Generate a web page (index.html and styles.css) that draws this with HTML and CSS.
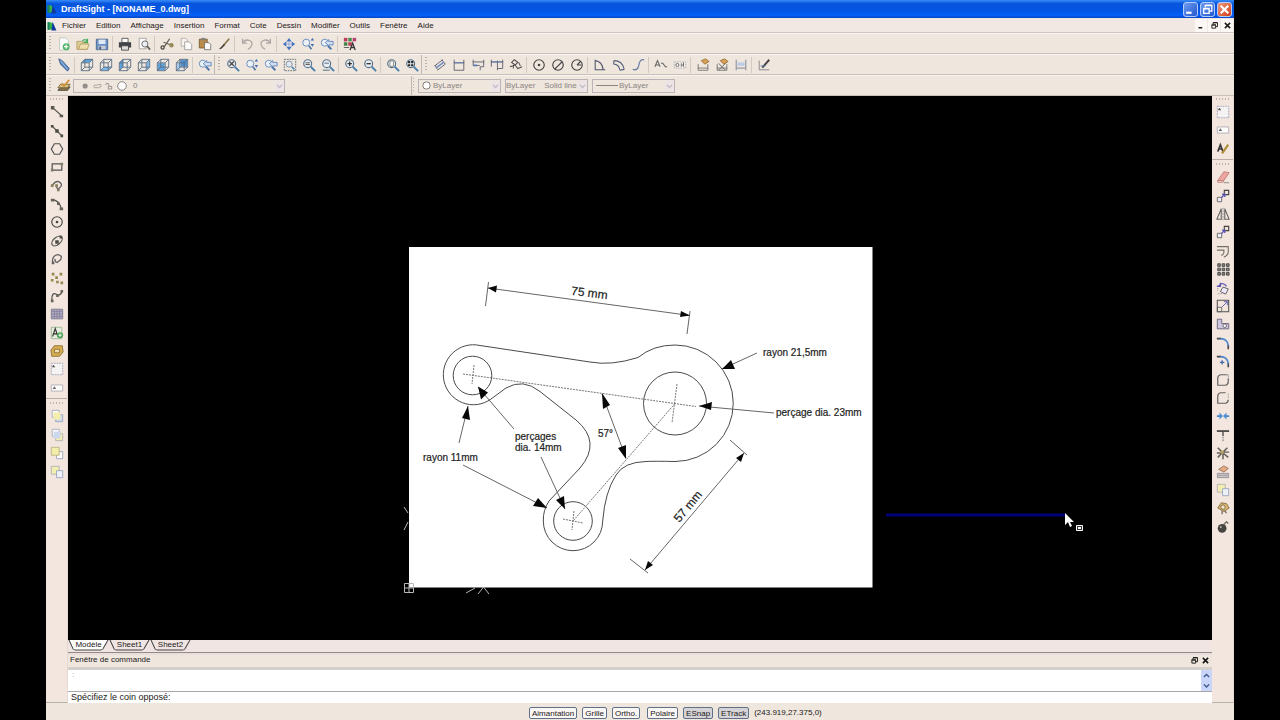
FILE: index.html
```html
<!DOCTYPE html>
<html lang="fr">
<head>
<meta charset="utf-8">
<title>DraftSight - [NONAME_0.dwg]</title>
<link rel="stylesheet" href="styles.css">
</head>
<body>
<svg class="sprite" aria-hidden="true">
  <symbol id="logo" viewBox="0 0 16 16"><path d="M1 2h4q5 1 5 6t-5 6H1z" fill="#35b44a"/><path d="M9 1l6 14H7z" fill="#123a9c"/><path d="M1 2h3v12H1z" fill="#1b7f5e"/></symbol>
  <symbol id="new" viewBox="0 0 16 16"><path d="M3 1h7l3 3v11H3z" fill="#fff" stroke="#b9c3bb"/><circle cx="10.500" cy="11" r="4" fill="#3fae58"/><path d="M10.500 8.500v5M8 11h5" stroke="#fff" stroke-width="1.500"/></symbol>
  <symbol id="open" viewBox="0 0 16 16"><path d="M1 5h5l1 1h6v8H1z" fill="#dfc98b" stroke="#ad965a"/><path d="M3 14l2-6h10l-2 6z" fill="#efe0ac" stroke="#ad965a"/><path d="M7 5q3-4 6 0M13 2v4h-4" fill="none" stroke="#35a651" stroke-width="1.500"/></symbol>
  <symbol id="save" viewBox="0 0 16 16"><path d="M1.500 2.500h13v12h-13z" fill="#5c88c3" stroke="#3c5a86"/><path d="M4 3h8v5H4z" fill="#dfeaf7"/><path d="M4 10h8v4H4z" fill="#c4cbd4"/><path d="M5 11h2v3H5z" fill="#33465f"/></symbol>
  <symbol id="print" viewBox="0 0 16 16"><path d="M4.500 1.500h7v5h-7z" fill="#fff" stroke="#444"/><path d="M1 6h14v6H1z" fill="#303236"/><path d="M4 10h8v5H4z" fill="#ddd" stroke="#333"/></symbol>
  <symbol id="preview" viewBox="0 0 16 16"><path d="M2.500 1.500h8v12h-8z" fill="#fff" stroke="#999"/><circle cx="9" cy="8" r="3.500" fill="#e9f1f6" stroke="#555"/><path d="M11.500 10.500l3.500 4" stroke="#555" stroke-width="2"/></symbol>
  <symbol id="cut" viewBox="0 0 16 16"><path d="M11 2L5 11M4 6l11 4" stroke="#5b564a" stroke-width="1.500"/><circle cx="3" cy="12" r="1.800" fill="none" stroke="#3b382f" stroke-width="1.500"/><circle cx="13" cy="9.500" r="1.800" fill="none" stroke="#8b7c3c" stroke-width="1.500"/></symbol>
  <symbol id="copy" viewBox="0 0 16 16"><path d="M2.500 1.500h5l2 2v7h-7z" fill="#f7f5f2" stroke="#aaa5a0"/><path d="M6.500 5.500h5l3 3v6h-8z" fill="#fff" stroke="#999590"/></symbol>
  <symbol id="paste" viewBox="0 0 16 16"><path d="M1.500 2.500h9v10h-9z" fill="#b58238" stroke="#6b4c20"/><path d="M4 1h4v3H4z" fill="#777"/><path d="M7.500 6.500h5l2 2v6h-7z" fill="#fff" stroke="#6c675e"/></symbol>
  <symbol id="brush" viewBox="0 0 16 16"><path d="M14 2L7 10" stroke="#7b6a3f" stroke-width="2"/><path d="M8 8L2 14l3-.500 4-4z" fill="#2c2a24"/></symbol>
  <symbol id="undo" viewBox="0 0 16 16"><path d="M3 2v5h5M3 7q3-5 8-3t1 8l-3 2" fill="none" stroke="#a8a29d" stroke-width="1.500"/></symbol>
  <symbol id="redo" viewBox="0 0 16 16"><path d="M13 2v5H8M13 7q-3-5-8-3t-1 8l3 2" fill="none" stroke="#a8a29d" stroke-width="1.500"/></symbol>
  <symbol id="pan" viewBox="0 0 16 16"><path d="M8 1l3 4H5zM8 15l3-4H5zM1 8l4-3v6zM15 8l-4-3v6z" fill="#2f66bd"/><path d="M8 5v6M5 8h6" stroke="#7ea2dc"/></symbol>
  <symbol id="lens" viewBox="0 0 16 16"><circle cx="6.500" cy="6.500" r="4.500" fill="#e4eef5" stroke="#47627c" stroke-width="1.300"/><path d="M10 10l5 5" stroke="#3c78a8" stroke-width="2.200"/></symbol>
  <symbol id="zoomdyn" viewBox="0 0 16 16"><circle cx="6" cy="6.500" r="4" fill="#edf4fa" stroke="#4a78b7"/><path d="M9 10l3 4" stroke="#3f6ca5" stroke-width="2"/><path d="M13 1l2 3h-4zM13 11l2-3h-4z" fill="#2c5fb2"/></symbol>
  <symbol id="zoomprev" viewBox="0 0 16 16"><circle cx="5.500" cy="6.500" r="4" fill="#edf4fa" stroke="#4a78b7"/><path d="M9 10l4 4" stroke="#3f6ca5" stroke-width="2.200"/><path d="M6 6.500l4-3.500v2h5v4h-5v1z" fill="#cfe0f4" stroke="#4a78b7"/></symbol>
  <symbol id="palette" viewBox="0 0 16 16"><path d="M1 1h4v4H1z" fill="#bd284e"/><path d="M6 1h4v4H6z" fill="#34833c"/><path d="M11 1h4v4h-4z" fill="#b52e63"/><path d="M1 6h4v4H1z" fill="#2e7c39"/><path d="M6 6h4v4H6z" fill="#b82947"/><path d="M1 12h6" stroke="#444"/><path d="M8 15l3-8 3 8M9 12h4" fill="none" stroke="#222" stroke-width="1.500"/></symbol>
  <symbol id="pencil" viewBox="0 0 16 16"><path d="M2 1l4 2 8 9-2 3-8-8z" fill="#4d7fbe" stroke="#2f5389"/><path d="M4 3l8 10" stroke="#9fc1e8"/></symbol>
  <symbol id="cube" viewBox="0 0 16 16"><path d="M1.500 5.500h9v9h-9zM5.500 1.500h9v9h-9zM1.500 5.500l4-4M10.500 5.500l4-4M1.500 14.500l4-4M10.500 14.500l4-4" fill="none" stroke="#485f79"/></symbol>
  <symbol id="cube1" viewBox="0 0 16 16"><path d="M2 5l4-4h8l-3 4z" fill="#4f9bdc"/><use href="#cube"/></symbol>
  <symbol id="cube2" viewBox="0 0 16 16"><path d="M2 14l4-4h8l-3 4z" fill="#73b5e9"/><use href="#cube"/></symbol>
  <symbol id="cube3" viewBox="0 0 16 16"><path d="M2 5l4-4v9l-4 4z" fill="#4f9bdc"/><use href="#cube"/></symbol>
  <symbol id="cube4" viewBox="0 0 16 16"><path d="M11 5l3-4v9l-3 4z" fill="#73b5e9"/><use href="#cube"/></symbol>
  <symbol id="cube5" viewBox="0 0 16 16"><path d="M2 6h8v8H2z" fill="#4f9bdc"/><use href="#cube"/></symbol>
  <symbol id="cube6" viewBox="0 0 16 16"><path d="M6 2h8v8H6z" fill="#3f87cb"/><path d="M2 6h4v8H2z" fill="#9cc8ee"/><use href="#cube"/></symbol>
  <symbol id="zoomfit" viewBox="0 0 16 16"><use href="#lens"/><path d="M4 4l5 5M9 4l-5 5" stroke="#333" stroke-width="1.500"/></symbol>
  <symbol id="zoomwin" viewBox="0 0 16 16"><path d="M1.500 1.500h13v13h-13z" fill="none" stroke="#4c5a68" stroke-dasharray="2 1"/><circle cx="7" cy="7" r="3.500" fill="#dfeaf3" stroke="#6b849b"/><path d="M10 10l3 3" stroke="#4180b0" stroke-width="2"/></symbol>
  <symbol id="zoomeq" viewBox="0 0 16 16"><use href="#lens"/><path d="M4 5.500h5M4 7.500h5" stroke="#333"/></symbol>
  <symbol id="zoomsel" viewBox="0 0 16 16"><use href="#lens"/><path d="M2 14h8M4 6h5" stroke="#7d90a2" stroke-width="1.500"/></symbol>
  <symbol id="zoomin" viewBox="0 0 16 16"><use href="#lens"/><path d="M4 6.500h5M6.500 4v5" stroke="#222" stroke-width="1.500"/></symbol>
  <symbol id="zoomout" viewBox="0 0 16 16"><use href="#lens"/><path d="M4 6.500h5" stroke="#222" stroke-width="1.500"/></symbol>
  <symbol id="zoompage" viewBox="0 0 16 16"><use href="#lens"/><path d="M4.500 3.500h3l1 1v5h-4z" fill="#fff" stroke="#777"/></symbol>
  <symbol id="zoomall" viewBox="0 0 16 16"><use href="#lens"/><path d="M3.500 3.500h2.500v2.500H3.500zM7 3.500h2.500v2.500H7zM3.500 7h2.500v2.500H3.500zM7 7h2.500v2.500H7z" fill="#111"/></symbol>
  <symbol id="dimal" viewBox="0 0 16 16"><path d="M2 9l9-7M5 14l9-7M2 8l3 5M10 2l4 5" fill="none" stroke="#454b5d"/><path d="M4 11l8-6" stroke="#5d7fc5" stroke-width="1.500"/></symbol>
  <symbol id="dimlin" viewBox="0 0 16 16"><path d="M2.500 2v12h11V2M2 5.500h12" fill="none" stroke="#4a4d5b"/><path d="M3 5.500h10" stroke="#4a70b5"/></symbol>
  <symbol id="dimbase" viewBox="0 0 16 16"><path d="M2.500 2v6M14.500 2v8h-4v4M2 4.500h13M2 8.500h8" fill="none" stroke="#4a4d5b"/><path d="M3 8.500l4 0" stroke="#4a70b5" stroke-width="2"/></symbol>
  <symbol id="dimcont" viewBox="0 0 16 16"><path d="M1.500 2v8M8.500 3v11M14.500 2v10h-6M1 4.500h14" fill="none" stroke="#4a4d5b"/><path d="M2 4.500h12" stroke="#4a70b5"/></symbol>
  <symbol id="dimjog" viewBox="0 0 16 16"><path d="M6 2l4 3-3 3-4-3zM1 10l6-2 3 4 5-2M5 8v4M11 5l2 4" fill="none" stroke="#413d3a" stroke-width="1.200"/></symbol>
  <symbol id="circ1" viewBox="0 0 16 16"><circle cx="8" cy="8" r="6" fill="none" stroke="#333" stroke-width="1.300"/><circle cx="8" cy="8" r="1.500" fill="#333"/></symbol>
  <symbol id="circ2" viewBox="0 0 16 16"><circle cx="8" cy="8" r="6" fill="none" stroke="#333" stroke-width="1.300"/><path d="M4 13l9-9" stroke="#333" stroke-width="1.300"/></symbol>
  <symbol id="circ3" viewBox="0 0 16 16"><circle cx="8" cy="8" r="6" fill="none" stroke="#333" stroke-width="1.300"/><path d="M8 8l4-4M8 8h5" stroke="#333" stroke-width="1.300"/></symbol>
  <symbol id="angle" viewBox="0 0 16 16"><path d="M2.500 2v11.500H14M2.500 3q8 1 9 10" fill="none" stroke="#3d465f" stroke-width="1.200"/></symbol>
  <symbol id="arclen" viewBox="0 0 16 16"><path d="M2 3q10 0 12 10M2 7q6 0 7 7M2 3v4M14 13l-5 1" fill="none" stroke="#435170" stroke-width="1.200"/></symbol>
  <symbol id="ord" viewBox="0 0 16 16"><path d="M2 13q6 2 7-5t6-6" fill="none" stroke="#62779e" stroke-width="1.500"/></symbol>
  <symbol id="leader" viewBox="0 0 16 16"><path d="M1 10l3-7 3 7M2 8h4M8 6h2l3 4h2" fill="none" stroke="#555" stroke-width="1.200"/></symbol>
  <symbol id="tol" viewBox="0 0 16 16"><path d="M1.500 4.500h13v7h-13z" fill="#f6f1ee" stroke="#aaa" stroke-dasharray="2 1"/><circle cx="5" cy="8" r="1.800" fill="none" stroke="#555"/><path d="M9.500 6v4M12 5v5M10 8h2" stroke="#555"/></symbol>
  <symbol id="dimedit" viewBox="0 0 16 16"><path d="M2.500 7v7h11V7M2 11.500h12" fill="none" stroke="#666"/><path d="M6 3l5-2 4 3-5 3z" fill="#d49a46" stroke="#936526"/></symbol>
  <symbol id="dimedit2" viewBox="0 0 16 16"><use href="#dimedit"/><path d="M4 6l8 8M12 6l-8 8" stroke="#555"/></symbol>
  <symbol id="dimtext" viewBox="0 0 16 16"><path d="M2.500 2v12M13.500 2v12M3 11.500h10" fill="none" stroke="#63718a"/><path d="M4 5h8v4H4z" fill="#b9cbe6"/></symbol>
  <symbol id="dimstyle" viewBox="0 0 16 16"><path d="M2.500 3v10.500H14" fill="none" stroke="#777"/><path d="M14 2l-8 9" stroke="#333" stroke-width="2.200"/><path d="M4 9h6" stroke="#5777b1"/></symbol>
  <symbol id="layers" viewBox="0 0 16 16"><path d="M1 13l3-4h11l-3 4z" fill="#77633a" stroke="#443"/><path d="M1 10l3-4h11l-3 4z" fill="#d6bd78" stroke="#665326"/><path d="M5 5l3 3 6-7" fill="none" stroke="#d08c2c" stroke-width="2"/></symbol>
  <symbol id="line" viewBox="0 0 16 16"><path d="M3 3l10 9" stroke="#444" stroke-width="1.300"/><path d="M1 1h4v4H1zM11 11h4v3h-4z" fill="#4b4a3f"/></symbol>
  <symbol id="xline" viewBox="0 0 16 16"><path d="M2 2l12 12" stroke="#444" stroke-width="1.300"/><path d="M1 1h3v3H1zM6 6h4v4H6zM12 12h3v3h-3z" fill="#3d3b33"/></symbol>
  <symbol id="poly" viewBox="0 0 16 16"><path d="M5 2h6l3.500 6-3.500 6H5L1.500 8z" fill="none" stroke="#444" stroke-width="1.400"/></symbol>
  <symbol id="rect" viewBox="0 0 16 16"><path d="M2.500 4.500h11v7h-11z" fill="none" stroke="#444" stroke-width="1.400"/><path d="M1 10h3v3H1zM12 3h3v3h-3z" fill="#77735f"/></symbol>
  <symbol id="arc3" viewBox="0 0 16 16"><path d="M3 7q3-5 7-4 5 3 2 6l-3 3M7 8l2 4" fill="none" stroke="#555" stroke-width="1.500"/><path d="M1 6h3v3H1zM8 11h3v3H8zM6 6h3v3H6z" fill="#7b724d"/></symbol>
  <symbol id="arc" viewBox="0 0 16 16"><path d="M3 3q8 1 10 11" fill="none" stroke="#444" stroke-width="1.500"/><path d="M1 2h4v3H1zM8 6h3v3H8zM11 12h4v3h-4z" fill="#59564a"/></symbol>
  <symbol id="ellipse" viewBox="0 0 16 16"><ellipse cx="8" cy="8" rx="7" ry="4" transform="rotate(-40 8 8)" fill="none" stroke="#444" stroke-width="1.400"/><path d="M6 7h4v4H6zM11 2h3v3h-3z" fill="#3b3a33"/></symbol>
  <symbol id="earc" viewBox="0 0 16 16"><path d="M3 12q-1-8 6-9 6 1 3 6l-4 3q-3-1-2-4" fill="none" stroke="#555" stroke-width="1.500"/><path d="M2 11h3v3H2z" fill="#555"/></symbol>
  <symbol id="points" viewBox="0 0 16 16"><path d="M2 2h3v3H2zM11 2h3v3h-3zM6 6h3v3H6zM12 12h3v3h-3zM1 9h3v3H1zM7 11h3v3H7z" fill="#8b7d3f"/></symbol>
  <symbol id="spline" viewBox="0 0 16 16"><path d="M2 13q0-10 5-7t7-4" fill="none" stroke="#444" stroke-width="1.500"/><path d="M1 12h3v3H1zM12 1h3v3h-3zM7 6h3v3H7z" fill="#59564a"/></symbol>
  <symbol id="hatch" viewBox="0 0 16 16"><path d="M1.500 2.500h13v11h-13z" fill="#a9a4c0" stroke="#6f6b86"/><path d="M2 5h12M2 8h12M2 11h12M5 3v10M8 3v10M11 3v10" stroke="#7d7898"/></symbol>
  <symbol id="note" viewBox="0 0 16 16"><path d="M1.500 1.500h12v13h-12z" fill="#e5efe0" stroke="#8fb28a"/><path d="M3 12l3-9 3 9M4 9h4" fill="none" stroke="#222" stroke-width="1.300"/><circle cx="11.500" cy="10.500" r="3.500" fill="#389b45"/><path d="M11.500 8.500v4M9.500 10.500h4" stroke="#fff"/></symbol>
  <symbol id="region" viewBox="0 0 16 16"><path d="M5 2h9l1 7-4 5H2L1 7z" fill="#d5a745" stroke="#806019"/><path d="M5 6h6v4H5z" fill="#f4deb0" stroke="#806019"/></symbol>
  <symbol id="block" viewBox="0 0 16 16"><path d="M1.500 1.500h13v13h-13z" fill="#f7f5f6" stroke="#9a9abc" stroke-dasharray="2 1"/><path d="M2 6l2-3 2 3z" fill="#444"/></symbol>
  <symbol id="attr" viewBox="0 0 16 16"><path d="M1.500 4.500h13v7h-13z" fill="#fff" stroke="#aaa6ae"/><path d="M3 9l2-3 2 3z" fill="#555"/></symbol>
  <symbol id="front" viewBox="0 0 16 16"><path d="M2.500 1.500h8v8h-8z" fill="#fff" stroke="#9da4b6"/><path d="M6.500 6.500h8v8h-8z" fill="#cad7ef" stroke="#8f9bb7"/><path d="M4 4h8v8H4z" fill="#f4efa7"/></symbol>
  <symbol id="back" viewBox="0 0 16 16"><path d="M2.500 1.500h8v8h-8z" fill="#fff" stroke="#9da4b6"/><path d="M6.500 6.500h8v8h-8z" fill="#f4efa7" stroke="#aaa"/><path d="M4 4h8v8H4z" fill="#cad7ef"/></symbol>
  <symbol id="above" viewBox="0 0 16 16"><path d="M7.500 6.500h7v8h-7z" fill="#fff" stroke="#8f9bb7"/><path d="M1.500 1.500h9v9h-9z" fill="#f4efa7" stroke="#b5ae70"/></symbol>
  <symbol id="below" viewBox="0 0 16 16"><path d="M1.500 1.500h9v9h-9z" fill="#f3efab" stroke="#a9aab0"/><path d="M7.500 6.500h7v8h-7z" fill="#eef3fb" stroke="#8f9bb7"/></symbol>
  <symbol id="textedit" viewBox="0 0 16 16"><path d="M2 11l3-8 3 8M3 8h4" fill="none" stroke="#222" stroke-width="1.800"/><path d="M14 3l-7 10" stroke="#a88424" stroke-width="2.500"/></symbol>
  <symbol id="eraser" viewBox="0 0 16 16"><path d="M9 2l6 1-6 9H2z" fill="#eba09b" stroke="#bd716c"/><path d="M2 12h7l-1 2H2z" fill="#f6d3cf" stroke="#bd716c"/><path d="M9 14.500h6" stroke="#777"/></symbol>
  <symbol id="copyent" viewBox="0 0 16 16"><path d="M9.500 1.500h5v5h-5z" fill="none" stroke="#333" stroke-width="1.300"/><path d="M1.500 9.500h5v5h-5z" fill="#eef" stroke="#555"/><path d="M6 10l4-4M10 9V6H7" fill="none" stroke="#4b48b0" stroke-width="1.500"/></symbol>
  <symbol id="mirror" viewBox="0 0 16 16"><path d="M6 2v12H1zM10 2v12h5z" fill="none" stroke="#555" stroke-width="1.200"/><path d="M8 1v14" stroke="#777" stroke-dasharray="2 1"/></symbol>
  <symbol id="offset" viewBox="0 0 16 16"><path d="M1 3h13v6q0 4-5 6M1 7h8v3q0 2-3 3" fill="none" stroke="#68645e" stroke-width="1.300"/></symbol>
  <symbol id="pattern" viewBox="0 0 16 16"><path d="M2 2h3v3H2zM7 2h3v3H7zM12 2h3v3h-3zM2 7h3v3H2zM7 7h3v3H7zM12 7h3v3h-3zM2 12h3v3H2zM7 12h3v3H7zM12 12h3v3h-3z" fill="#777" stroke="#333"/></symbol>
  <symbol id="rotate" viewBox="0 0 16 16"><path d="M2 14.500h6M2 11V8" stroke="#777" stroke-dasharray="1 1"/><path d="M8 7l6 2-3 6-6-3z" fill="#eee9ff" stroke="#444"/><path d="M3 6q4-6 9 0M5 2v4H1" fill="none" stroke="#4b48b0" stroke-width="1.500"/></symbol>
  <symbol id="scale" viewBox="0 0 16 16"><path d="M1.500 1.500h13v13h-13z" fill="none" stroke="#444" stroke-width="1.200"/><path d="M1.500 9.500h5v5h-5z" fill="none" stroke="#555"/><path d="M7 9l6-6M13 7V3H9" fill="none" stroke="#4b48b0"/></symbol>
  <symbol id="stretch" viewBox="0 0 16 16"><path d="M1.500 2.500h5v5h8v6h-13z" fill="#c9c3dd" stroke="#555074"/><circle cx="10" cy="10" r="2" fill="#fff" stroke="#555"/></symbol>
  <symbol id="fillet" viewBox="0 0 16 16"><path d="M1 3h5M14 10v5" stroke="#333" stroke-width="1.800"/><path d="M5 3q8 0 9 8" fill="none" stroke="#3b7ec9" stroke-width="1.800"/></symbol>
  <symbol id="fillet2" viewBox="0 0 16 16"><use href="#fillet"/><path d="M7 7v5M4.500 9.500h5" stroke="#315da5" stroke-width="1.500"/></symbol>
  <symbol id="joinp" viewBox="0 0 16 16"><path d="M12 2H5q-3 1-3 4v8h9q3-1 3-4V6" fill="none" stroke="#555" stroke-width="1.400"/><path d="M11 2h3v3" fill="none" stroke="#888"/></symbol>
  <symbol id="split" viewBox="0 0 16 16"><path d="M11 2H5q-3 1-3 4v8h9q3-1 3-4" fill="none" stroke="#555" stroke-width="1.400"/><path d="M14 3v5" stroke="#777" stroke-dasharray="1 1"/></symbol>
  <symbol id="weld" viewBox="0 0 16 16"><path d="M1 8h5M10 8h5" stroke="#3679c5" stroke-width="2"/><path d="M4 4l4 4-4 4zM12 4L8 8l4 4z" fill="#3b86d3"/></symbol>
  <symbol id="trim" viewBox="0 0 16 16"><path d="M1 3.500h14" stroke="#333" stroke-width="2"/><path d="M8 4v5" stroke="#333" stroke-width="1.500"/><path d="M8 10v5" stroke="#555" stroke-dasharray="2 1"/></symbol>
  <symbol id="explode" viewBox="0 0 16 16"><path d="M2 2l5 5M13 2L8 7M8 8l6 5M7 8l-5 5M8 9v6M9 7h6M1 8h5" stroke="#55514b" stroke-width="1.700"/><circle cx="7" cy="7" r="2" fill="#b29654"/></symbol>
  <symbol id="props" viewBox="0 0 16 16"><path d="M1 9h14v6H1z" fill="#9c949a"/><path d="M2 11h12M2 13h12" stroke="#ccc"/><path d="M3 5l6-4 5 3-5 4z" fill="#e2a67b" stroke="#95603e"/></symbol>
  <symbol id="purge" viewBox="0 0 16 16"><path d="M2 8l4-6 6 1 3 5-6 4z" fill="#d8b165" stroke="#775c2a"/><circle cx="8" cy="7" r="2.500" fill="#f6e9c8" stroke="#6c5a33"/><path d="M7 11v4M10 11l2 3" stroke="#665" stroke-width="1.500"/></symbol>
  <symbol id="bomb" viewBox="0 0 16 16"><circle cx="7" cy="9.500" r="5" fill="#34332f"/><path d="M9 5l3-3 2 2" fill="none" stroke="#6c675a" stroke-width="1.700"/><circle cx="5.500" cy="8" r="1.200" fill="#aaa"/></symbol>
  <symbol id="min" viewBox="0 0 12 12"><path d="M2 9h5" stroke="currentColor" stroke-width="2"/></symbol>
  <symbol id="restore" viewBox="0 0 12 12"><path d="M4 4V2.500h6v5H8M2.500 5.500h5v4h-5zM2 5h6M4 2h6" fill="none" stroke="currentColor" stroke-width="1.200"/></symbol>
  <symbol id="close" viewBox="0 0 12 12"><path d="M2.500 2.500l7 7M9.500 2.500l-7 7" stroke="currentColor" stroke-width="2"/></symbol>
  <symbol id="chev" viewBox="0 0 12 12"><path d="M2.500 4.500L6 8l3.500-3.500" fill="none" stroke="currentColor" stroke-width="1.800"/></symbol>
  <symbol id="chevup" viewBox="0 0 12 12"><path d="M2.500 8L6 4.500 9.500 8" fill="none" stroke="currentColor" stroke-width="1.800"/></symbol>
</svg>

<div class="window">
  <header class="titlebar">
    <svg class="logo"><use href="#logo"/></svg>
    <h1 class="title">DraftSight - [NONAME_0.dwg]</h1>
    <div class="winbtns">
      <button class="winbtn" aria-label="Réduire"><svg><use href="#min"/></svg></button>
      <button class="winbtn" aria-label="Restaurer"><svg><use href="#restore"/></svg></button>
      <button class="winbtn winclose" aria-label="Fermer"><svg><use href="#close"/></svg></button>
    </div>
  </header>
  <nav class="menubar">
    <svg class="logo"><use href="#logo"/></svg>
    <div class="menus">
      <button>Fichier</button><button>Edition</button><button>Affichage</button><button>Insertion</button><button>Format</button><button>Cote</button><button>Dessin</button><button>Modifier</button><button>Outils</button><button>Fenêtre</button><button>Aide</button>
    </div>
    <div class="mdibtns">
      <button aria-label="Réduire le dessin"><svg><use href="#min"/></svg></button>
      <button aria-label="Restaurer le dessin"><svg><use href="#restore"/></svg></button>
      <button aria-label="Fermer le dessin"><svg><use href="#close"/></svg></button>
    </div>
  </nav>

  <div class="row">
    <div class="toolbar" role="toolbar" aria-label="Standard">
      <i class="grip"></i>
      <button class="tool" aria-label="Nouveau"><svg><use href="#new"/></svg></button>
      <button class="tool" aria-label="Ouvrir"><svg><use href="#open"/></svg></button>
      <button class="tool" aria-label="Enregistrer"><svg><use href="#save"/></svg></button>
      <i class="sep"></i>
      <button class="tool" aria-label="Imprimer"><svg><use href="#print"/></svg></button>
      <button class="tool" aria-label="Aperçu"><svg><use href="#preview"/></svg></button>
      <i class="sep"></i>
      <button class="tool" aria-label="Couper"><svg><use href="#cut"/></svg></button>
      <button class="tool" aria-label="Copier"><svg><use href="#copy"/></svg></button>
      <button class="tool" aria-label="Coller"><svg><use href="#paste"/></svg></button>
      <button class="tool" aria-label="Copier les propriétés"><svg><use href="#brush"/></svg></button>
      <i class="sep"></i>
      <button class="tool" aria-label="Annuler"><svg><use href="#undo"/></svg></button>
      <button class="tool" aria-label="Rétablir"><svg><use href="#redo"/></svg></button>
      <i class="sep"></i>
      <button class="tool" aria-label="Panoramique"><svg><use href="#pan"/></svg></button>
      <button class="tool" aria-label="Zoom dynamique"><svg><use href="#zoomdyn"/></svg></button>
      <button class="tool" aria-label="Zoom précédent"><svg><use href="#zoomprev"/></svg></button>
      <i class="sep"></i>
      <button class="tool" aria-label="Propriétés"><svg><use href="#palette"/></svg></button>
    </div>
  </div>

  <div class="row">
    <div class="toolbar" role="toolbar" aria-label="Vues">
      <i class="grip"></i>
      <button class="tool" aria-label="Vues"><svg><use href="#pencil"/></svg></button>
      <i class="sep"></i>
      <button class="tool" aria-label="Dessus"><svg><use href="#cube1"/></svg></button>
      <button class="tool" aria-label="Dessous"><svg><use href="#cube2"/></svg></button>
      <button class="tool" aria-label="Gauche"><svg><use href="#cube3"/></svg></button>
      <button class="tool" aria-label="Droite"><svg><use href="#cube4"/></svg></button>
      <button class="tool" aria-label="Avant"><svg><use href="#cube5"/></svg></button>
      <button class="tool" aria-label="Arrière"><svg><use href="#cube6"/></svg></button>
      <i class="sep"></i>
      <button class="tool" aria-label="Vue précédente"><svg><use href="#zoomprev"/></svg></button>
    </div>
    <div class="toolbar next" role="toolbar" aria-label="Zoom">
      <i class="grip"></i>
      <button class="tool" aria-label="Zoom ajusté"><svg><use href="#zoomfit"/></svg></button>
      <button class="tool" aria-label="Zoom dynamique"><svg><use href="#zoomdyn"/></svg></button>
      <button class="tool" aria-label="Zoom précédent"><svg><use href="#zoomprev"/></svg></button>
      <button class="tool" aria-label="Zoom fenêtre"><svg><use href="#zoomwin"/></svg></button>
      <button class="tool" aria-label="Zoom facteur"><svg><use href="#zoomeq"/></svg></button>
      <button class="tool" aria-label="Zoom sélection"><svg><use href="#zoomsel"/></svg></button>
      <i class="sep"></i>
      <button class="tool" aria-label="Zoom avant"><svg><use href="#zoomin"/></svg></button>
      <button class="tool" aria-label="Zoom arrière"><svg><use href="#zoomout"/></svg></button>
      <i class="sep"></i>
      <button class="tool" aria-label="Zoom limites"><svg><use href="#zoompage"/></svg></button>
      <button class="tool" aria-label="Zoom tout"><svg><use href="#zoomall"/></svg></button>
    </div>
    <div class="toolbar next" role="toolbar" aria-label="Cote">
      <i class="grip"></i>
      <button class="tool" aria-label="Alignée"><svg><use href="#dimal"/></svg></button>
      <button class="tool" aria-label="Linéaire"><svg><use href="#dimlin"/></svg></button>
      <button class="tool" aria-label="Ligne de base"><svg><use href="#dimbase"/></svg></button>
      <button class="tool" aria-label="Continue"><svg><use href="#dimcont"/></svg></button>
      <button class="tool" aria-label="Coordonnée"><svg><use href="#dimjog"/></svg></button>
      <i class="sep"></i>
      <button class="tool" aria-label="Marque de centre"><svg><use href="#circ1"/></svg></button>
      <button class="tool" aria-label="Diamètre"><svg><use href="#circ2"/></svg></button>
      <button class="tool" aria-label="Rayon"><svg><use href="#circ3"/></svg></button>
      <i class="sep"></i>
      <button class="tool" aria-label="Angulaire"><svg><use href="#angle"/></svg></button>
      <button class="tool" aria-label="Longueur d'arc"><svg><use href="#arclen"/></svg></button>
      <button class="tool" aria-label="Raccourcie"><svg><use href="#ord"/></svg></button>
      <i class="sep"></i>
      <button class="tool" aria-label="Ligne de repère"><svg><use href="#leader"/></svg></button>
      <button class="tool" aria-label="Tolérance"><svg><use href="#tol"/></svg></button>
      <i class="sep"></i>
      <button class="tool" aria-label="Modifier la cote"><svg><use href="#dimedit"/></svg></button>
      <button class="tool" aria-label="Remplacer la cote"><svg><use href="#dimedit2"/></svg></button>
      <button class="tool" aria-label="Texte de cote"><svg><use href="#dimtext"/></svg></button>
      <i class="sep"></i>
      <button class="tool" aria-label="Style de cote"><svg><use href="#dimstyle"/></svg></button>
    </div>
  </div>

  <div class="row">
    <div class="toolbar layerbar" role="toolbar" aria-label="Calques">
      <i class="grip"></i>
      <button class="tool" aria-label="Calques"><svg><use href="#layers"/></svg></button>
      <div class="combo layer">
        <svg class="states" viewBox="0 0 56 14" aria-hidden="true"><circle cx="6" cy="7" r="3" fill="#928d89"/><path d="M16 8q0-3 3-2l5-1q2 3-2 4h-5z" fill="none" stroke="#a39d98"/><path d="M30 6q0-3 3-2l1 3M33 7.500h4v3h-4z" fill="none" stroke="#8e8984"/><circle cx="49" cy="7" r="5" fill="#fff" stroke="#77736f"/></svg>
        <select disabled aria-label="Calque actif"><option>0</option></select>
        <svg class="arrow"><use href="#chev"/></svg>
      </div>
    </div>
    <div class="toolbar next props" role="toolbar" aria-label="Propriétés">
      <i class="grip"></i>
      <div class="combo"><svg class="swatch" viewBox="0 0 12 12" aria-hidden="true"><circle cx="6" cy="6" r="4" fill="#fff" stroke="#77736f"/></svg><select disabled aria-label="Couleur de ligne"><option>ByLayer</option></select><svg class="arrow"><use href="#chev"/></svg></div>
      <div class="combo"><select disabled aria-label="Style de ligne"><option>ByLayer &nbsp; &nbsp;Solid line</option></select><svg class="arrow"><use href="#chev"/></svg></div>
      <div class="combo"><i class="rule"></i><select disabled aria-label="Épaisseur de ligne"><option>ByLayer</option></select><svg class="arrow"><use href="#chev"/></svg></div>
    </div>
  </div>

  <main class="work">
    <aside class="side">
      <i class="hgrip"></i>
      <div class="tools draw" role="toolbar" aria-label="Dessin" aria-orientation="vertical">
        <button class="tool" aria-label="Ligne"><svg><use href="#line"/></svg></button>
        <button class="tool" aria-label="Ligne infinie"><svg><use href="#xline"/></svg></button>
        <button class="tool" aria-label="Polygone"><svg><use href="#poly"/></svg></button>
        <button class="tool" aria-label="Rectangle"><svg><use href="#rect"/></svg></button>
        <button class="tool" aria-label="Polyligne"><svg><use href="#arc3"/></svg></button>
        <button class="tool" aria-label="Arc"><svg><use href="#arc"/></svg></button>
        <button class="tool" aria-label="Cercle"><svg><use href="#circ1"/></svg></button>
        <button class="tool" aria-label="Ellipse"><svg><use href="#ellipse"/></svg></button>
        <button class="tool" aria-label="Arc elliptique"><svg><use href="#earc"/></svg></button>
        <button class="tool" aria-label="Point"><svg><use href="#points"/></svg></button>
        <button class="tool" aria-label="Spline"><svg><use href="#spline"/></svg></button>
        <button class="tool" aria-label="Hachures"><svg><use href="#hatch"/></svg></button>
        <button class="tool" aria-label="Note"><svg><use href="#note"/></svg></button>
        <button class="tool" aria-label="Région"><svg><use href="#region"/></svg></button>
        <button class="tool" aria-label="Bloc"><svg><use href="#block"/></svg></button>
        <button class="tool" aria-label="Attribut"><svg><use href="#attr"/></svg></button>
      </div>
      <i class="hsep"></i>
      <i class="hgrip"></i>
      <div class="tools order" role="toolbar" aria-label="Ordre" aria-orientation="vertical">
        <button class="tool" aria-label="Premier plan"><svg><use href="#front"/></svg></button>
        <button class="tool" aria-label="Arrière-plan"><svg><use href="#back"/></svg></button>
        <button class="tool" aria-label="Au-dessus"><svg><use href="#above"/></svg></button>
        <button class="tool" aria-label="Au-dessous"><svg><use href="#below"/></svg></button>
      </div>
    </aside>

    <section class="center">
      <div class="canvas">
        <svg class="drawing" viewBox="68 96 1144 543" role="img" aria-label="Plan de la pièce">
          <rect x="409" y="247" width="463.500" height="340.500" fill="#fff"/>
          <g class="outline">
            <path d="M480 345.500L590 362Q611 366 638 357.500Q653 345 675 345A58.250 58.250 0 0 1 675 461.500Q654 461 646 461.500Q624 462 616 475Q605 492 602.700 521A29.700 29.700 0 0 1 543.300 521Q543 510 549 501L580 468Q602 442 576 420L540 391.500Q523 378 506 388L491 399A30 30 0 1 1 480 345.500"/>
            <circle cx="472.500" cy="375.500" r="19.300"/><circle cx="675" cy="403.500" r="31.500"/><circle cx="573" cy="521" r="19.300"/>
          </g>
          <path class="axis" d="M463 374L696 406.500M474 365l-2 19M677 384l-5 39M675 403.500L573 521M563 519l20 4M574 511l-2 19"/>
          <path class="thin" d="M488.500 282l-3 24M690 311l-3 23M488 288L690 315.500M730 440l17 15M630 559l18 14M744 453L645 570M757 353l-35 16M774 413l-75-7M459 443l9-37M463 465l84 43M478 387l36 42M541 457l24 52M602 394l24 64"/>
          <path class="heads" d="M488 288l9-2.500-1 7zM690 315.500l-9-4.500-1 6zM744 453l-8 5 5 4zM645 570l8-5-5-4zM722 369l9-9 4 9zM699 406l13-4-1 8zM468 406l-6 12 8 2zM547 508l-9-10-5 8zM478 386.500l10 6-7 7zM565 509l-9-9 8-4zM602 393l8 12-7 4zM626 459l-8-11 8-3z"/>
          <g class="label">
            <text x="763" y="356">rayon 21,5mm</text>
            <text x="776" y="416">perçage dia. 23mm</text>
            <text x="515" y="440">perçages</text>
            <text x="515" y="451">dia. 14mm</text>
            <text x="423" y="461">rayon 11mm</text>
            <text x="598" y="437">57°</text>
          </g>
          <text class="dim" transform="translate(589 297) rotate(7)">75 mm</text>
          <text class="dim" transform="translate(691 509) rotate(-50)">57 mm</text>
          <path class="ucs" d="M404.500 583.500h9v9h-9zM409 583v10M404 588h10M404 507l4 6M408 522l-4 8M466 593l9-5M478 594l5.500-7 5.500 7"/>
          <path d="M886 515h180" stroke="#000078" stroke-width="3"/>
          <path d="M1065 513v12l3-3 2 5 2-1-2-4h4z" fill="#fff"/>
          <path d="M1076.500 525.500h6v5h-6z" fill="#333" stroke="#fff"/><path d="M1078 527h3v2h-3z" fill="#fff"/>
        </svg>
      </div>
      <div class="sheets" role="tablist">
        <button class="sheet current" role="tab" aria-selected="true"><svg viewBox="0 0 40 11" preserveAspectRatio="none"><path d="M1 0l4 9q1 1 2 1h25q1 0 2-1l5-9"/></svg><span>Modèle</span></button>
        <button class="sheet" role="tab"><svg viewBox="0 0 40 11" preserveAspectRatio="none"><path d="M1 0l4 9q1 1 2 1h25q1 0 2-1l5-9"/></svg><span>Sheet1</span></button>
        <button class="sheet" role="tab"><svg viewBox="0 0 40 11" preserveAspectRatio="none"><path d="M1 0l4 9q1 1 2 1h25q1 0 2-1l5-9"/></svg><span>Sheet2</span></button>
      </div>
      <section class="command">
        <header class="cmdhead"><h2>Fenêtre de commande</h2>
          <button aria-label="Détacher"><svg><use href="#restore"/></svg></button><button aria-label="Fermer la fenêtre de commande"><svg><use href="#close"/></svg></button>
        </header>
        <div class="history"><output>:</output>
          <div class="scroll"><button aria-label="Défiler vers le haut"><svg><use href="#chevup"/></svg></button><button aria-label="Défiler vers le bas"><svg><use href="#chev"/></svg></button></div>
        </div>
        <input class="prompt" aria-label="Commande" value="Spécifiez le coin opposé:">
      </section>
    </section>

    <aside class="side">
      <i class="hgrip"></i>
      <div class="tools edit" role="toolbar" aria-label="Blocs" aria-orientation="vertical">
        <button class="tool" aria-label="Définir un bloc"><svg><use href="#block"/></svg></button>
        <button class="tool" aria-label="Modifier un attribut"><svg><use href="#attr"/></svg></button>
        <button class="tool" aria-label="Modifier une annotation"><svg><use href="#textedit"/></svg></button>
      </div>
      <i class="hsep"></i>
      <i class="hgrip"></i>
      <div class="tools modify" role="toolbar" aria-label="Modifier" aria-orientation="vertical">
        <button class="tool" aria-label="Supprimer"><svg><use href="#eraser"/></svg></button>
        <button class="tool" aria-label="Copier"><svg><use href="#copyent"/></svg></button>
        <button class="tool" aria-label="Miroir"><svg><use href="#mirror"/></svg></button>
        <button class="tool" aria-label="Déplacer"><svg><use href="#copyent"/></svg></button>
        <button class="tool" aria-label="Décaler"><svg><use href="#offset"/></svg></button>
        <button class="tool" aria-label="Répétition"><svg><use href="#pattern"/></svg></button>
        <button class="tool" aria-label="Rotation"><svg><use href="#rotate"/></svg></button>
        <button class="tool" aria-label="Échelle"><svg><use href="#scale"/></svg></button>
        <button class="tool" aria-label="Étirer"><svg><use href="#stretch"/></svg></button>
        <button class="tool" aria-label="Congé"><svg><use href="#fillet"/></svg></button>
        <button class="tool" aria-label="Chanfrein"><svg><use href="#fillet2"/></svg></button>
        <button class="tool" aria-label="Coupure"><svg><use href="#joinp"/></svg></button>
        <button class="tool" aria-label="Diviser"><svg><use href="#split"/></svg></button>
        <button class="tool" aria-label="Souder"><svg><use href="#weld"/></svg></button>
        <button class="tool" aria-label="Ajuster"><svg><use href="#trim"/></svg></button>
        <button class="tool" aria-label="Décomposer"><svg><use href="#explode"/></svg></button>
        <button class="tool" aria-label="Propriétés"><svg><use href="#props"/></svg></button>
        <button class="tool" aria-label="Ordre d'affichage"><svg><use href="#below"/></svg></button>
        <button class="tool" aria-label="Nettoyer"><svg><use href="#purge"/></svg></button>
        <button class="tool" aria-label="Éclater"><svg><use href="#bomb"/></svg></button>
      </div>
    </aside>
  </main>

  <footer class="status">
    <button>Aimantation</button><button>Grille</button><button>Ortho.</button><button class="apart">Polaire</button><button class="on" aria-pressed="true">ESnap</button><button class="on" aria-pressed="true">ETrack</button>
    <output>(243.919,27.375,0)</output>
  </footer>
</div>
</body>
</html>
```

FILE: styles.css
```css
* { box-sizing: border-box; }
body {
  margin: 0;
  background: #000;
  color: #1c1818;
  font: 8px/10px "Liberation Sans", Arial, sans-serif;
}
button, input, select { font: inherit; color: inherit; margin: 0; padding: 0; border: 0; background: none; }
i { display: block; flex: none; }
.sprite { display: none; }

.window {
  display: flex;
  flex-direction: column;
  min-height: 100vh;
  margin: 0 46px;
  background: #efe6de;
}

/* Title and menus */
.titlebar {
  display: flex;
  align-items: center;
  gap: 4px;
  height: 18px;
  padding: 0 2px 0 1px;
  background: linear-gradient(#3a8cf8, #0755dc 20%, #0455e4 60%, #0660f8 85%, #0344c4);
  color: #fff;
}
.logo { width: 10px; height: 12px; flex: none; }
.title { flex: 1; margin: 0; font-size: 9px; line-height: 12px; }
.winbtns { display: flex; gap: 2px; }
.winbtn {
  width: 15px;
  height: 15px;
  border: 1px solid #b4ccf8;
  border-radius: 3px;
  background: linear-gradient(135deg, #6f9cf0, #2258d0);
  color: #fff;
}
.winclose { background: linear-gradient(135deg, #f09a7c, #cf3d18); }
.winbtn svg { display: block; width: 13px; height: 13px; }
.menubar { display: flex; align-items: center; height: 15px; padding: 1px 1px 0; background: #f2e8e3; border-bottom: 1px solid #cfc6c1; }
.menus { display: flex; flex: 1; gap: 10px; padding-left: 5px; }
.mdibtns { display: flex; gap: 1px; }
.mdibtns button { width: 12px; height: 13px; background: #fbf7f5; }
.mdibtns svg { display: block; width: 9px; height: 9px; margin: 0 auto; }

/* Toolbars */
.row { display: flex; height: 21px; border-bottom: 1px solid #c8c0ba; border-top: 1px solid #faf4f0; }
.toolbar { display: flex; align-items: center; }
.next { border-left: 1px solid #bfb7b2; }
.grip { width: 8px; height: 15px; border: solid transparent; border-width: 0 3px; background: repeating-linear-gradient(#b9b0ab 0 1px, transparent 1px 3px) content-box; }
.tool { display: grid; place-items: center; width: 19px; height: 19px; }
.tool svg { width: 14px; height: 14px; opacity: .9; }
.sep { width: 4px; height: 16px; background: linear-gradient(90deg, transparent 1px, #d3c9c3 1px 2px, transparent 2px); }
.layerbar { flex: none; width: 365px; }
.combo { display: flex; align-items: center; width: 83px; height: 14px; border: 1px solid #b9b2b6; color: #8a8480; }
.layer { width: 212px; }
.props { gap: 4px; }
.props .grip { width: 3px; border-width: 0 1px; margin-right: -1px; }
.combo select { flex: 1; min-width: 0; appearance: none; color: #8a8480; opacity: 1; white-space: pre; }
.arrow { width: 9px; height: 10px; flex: none; color: #c0bac4; background: #ece4e6; }
.states { width: 56px; height: 12px; margin: 0 1px 0 2px; }
.swatch { width: 11px; height: 11px; margin: 0 1px 0 2px; }
.rule { width: 22px; height: 1px; margin: 0 1px 0 3px; background: #8b8581; }

/* Work area */
.work { display: flex; flex: 1; }
.side { width: 22px; flex: none; border-right: 1px solid #e6d8d2; border-bottom: 1px solid #b8b0aa; background: #f2e6df; }
.hgrip { height: 7px; margin: 0 4px; border: solid transparent; border-width: 2px 0 3px; background: repeating-linear-gradient(90deg, #bdb3ae 0 1px, transparent 1px 3px) content-box; }
.hsep { height: 1px; margin: 1px 0; background: #b9aca6; }
.tools { display: grid; grid-auto-rows: 1fr; justify-items: center; align-items: center; }
.tools .tool { height: 18px; }
.draw { height: 294px; }
.order { height: 74px; }
.edit { height: 55px; }
.modify { height: 368px; }

.center { display: flex; flex: 1; flex-direction: column; min-width: 0; }
.canvas { flex: 1; min-height: 0; background: #000; }
.drawing { display: block; width: 100%; height: 543px; }
.outline { fill: none; stroke: #4a4a4c; stroke-width: 1; }
.thin { fill: none; stroke: #666; stroke-width: 1; }
.axis { fill: none; stroke: #777; stroke-width: 1; stroke-dasharray: 2 1; }
.heads { fill: #080808; }
.label { font-size: 10px; fill: #222; stroke: #222; stroke-width: .2; }
.dim { font-size: 12px; fill: #222; stroke: #222; stroke-width: .2; text-anchor: middle; }
.ucs { fill: none; stroke: #b8b8b8; }

.sheets { display: flex; height: 12px; padding-left: 0; background: #f0e5e2; }
.sheet { position: relative; display: grid; place-items: center; width: 41px; height: 11px; padding-bottom: 1px; }
.sheet svg { position: absolute; inset: 0; width: 100%; height: 100%; fill: #f0e5e2; stroke: #444; }
.sheet span { position: relative; }
.current svg { fill: #fff; }
.command { border-top: 1px solid #948a87; }
.cmdhead { display: flex; align-items: center; height: 17px; padding: 0 1px 2px 2px; border-top: 2px solid #e9dedb; border-bottom: 3px solid #d5cfcc; }
.cmdhead h2 { flex: 1; margin: 0; font: inherit; }
.cmdhead button { width: 11px; height: 10px; }
.cmdhead svg { display: block; width: 9px; height: 9px; margin: 0 auto; color: #111; }
.history { display: flex; justify-content: space-between; height: 22px; padding-left: 4px; background: #fff; border-bottom: 1px solid #aaa6a9; color: #999; }
.scroll { display: flex; flex-direction: column; width: 11px; background: #c9d6fa; color: #3b528b; }
.scroll button { flex: 1; }
.scroll svg { display: block; width: 9px; height: 9px; margin: 0 auto; }
.prompt { display: block; width: 100%; height: 11px; padding-left: 3px; background: #fff; font-size: 9px; line-height: 11px; border-radius: 0; }

/* Status bar */
.status { display: flex; align-items: center; gap: 5px; height: 17px; padding: 3px 0 0 483px; }
.status button { height: 12px; padding: 0 2px; border: 1px solid #5f7189; border-radius: 2px; background: #f9f6f4; line-height: 9px; }
.status .apart { margin-left: 2px; }
.status .on { background: #d5d3d6; }
```
